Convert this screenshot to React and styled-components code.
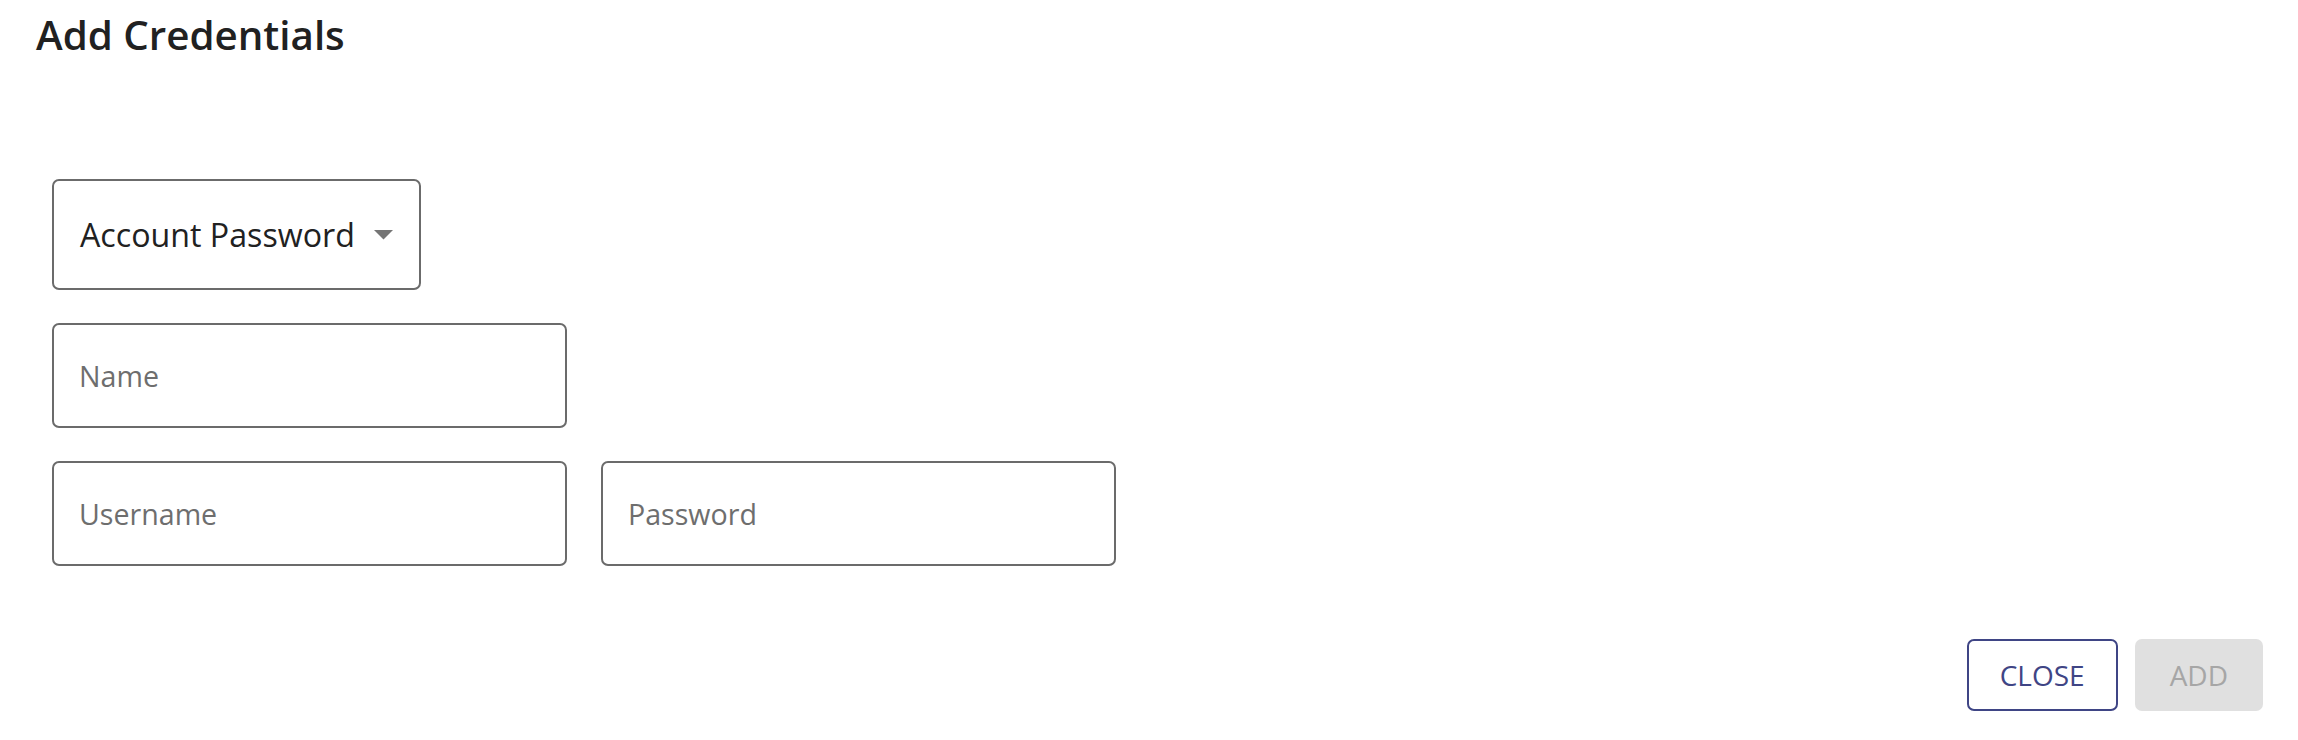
import React from "react";
import styled, { createGlobalStyle } from "styled-components";

const Global = createGlobalStyle`
  html, body { margin: 0; padding: 0; background: #ffffff; }
  body { font-family: "Open Sans", "Noto Sans", sans-serif; color: #212121; }
  * { box-sizing: border-box; }
`;

const Dialog = styled.div`
  width: 2298px;
  height: 740px;
  display: flex;
  flex-direction: column;
  padding: 8px 35px 0 36px;
`;

const Title = styled.h2`
  margin: 0;
  font-size: 40.3px;
  line-height: 54px;
  font-weight: 600;
  color: #212121;
`;

const Form = styled.div`
  display: flex;
  flex-direction: column;
  align-items: flex-start;
  gap: 33px;
  margin-top: 117px;
  padding-left: 16px;
`;

const Select = styled.div`
  display: inline-flex;
  align-items: center;
  gap: 19px;
  height: 111px;
  padding: 0 26px;
  border: 2px solid #6b6b6b;
  border-radius: 7px;
  font-size: 32.2px;
  color: #212121;
  cursor: pointer;
`;

const Row = styled.div`
  display: flex;
  gap: 34px;
`;

const Field = styled.input`
  width: 515px;
  height: 105px;
  padding: 0 25px;
  border: 2px solid #6b6b6b;
  border-radius: 7px;
  font-family: "Open Sans", "Noto Sans", sans-serif;
  font-size: 28.6px;
  color: #212121;
  background: #fff;
  outline: none;
  &::placeholder { color: #6e6e6e; opacity: 1; }
`;

const Actions = styled.div`
  display: flex;
  justify-content: flex-end;
  gap: 17px;
  margin-top: 73px;
`;

const Button = styled.button`
  height: 72px;
  padding: 0 ${(p) => (p.$outlined ? "31px" : "35px")};
  border-radius: 7px;
  font-family: "Open Sans", "Noto Sans", sans-serif;
  font-size: 28px;
  line-height: 1;
  border: ${(p) => (p.$outlined ? "2px solid #3f4585" : "none")};
  background: ${(p) => (p.$outlined ? "#ffffff" : "#e0e0e0")};
  color: ${(p) => (p.$outlined ? "#3f4585" : "#a6a6a6")};
  cursor: ${(p) => (p.disabled ? "default" : "pointer")};
`;

const Caret = () => (
  <svg width="19" height="10" viewBox="0 0 19 10" aria-hidden="true">
    <polygon points="0,0 19,0 9.5,9.5" fill="#757575" />
  </svg>
);

export default function App() {
  return (
    <>
      <Global />
      <Dialog>
        <Title>Add Credentials</Title>
        <Form>
          <Select>
            <span>Account Password</span>
            <Caret />
          </Select>
          <Field placeholder="Name" />
          <Row>
            <Field placeholder="Username" />
            <Field placeholder="Password" type="password" />
          </Row>
        </Form>
        <Actions>
          <Button $outlined>CLOSE</Button>
          <Button disabled>ADD</Button>
        </Actions>
      </Dialog>
    </>
  );
}
